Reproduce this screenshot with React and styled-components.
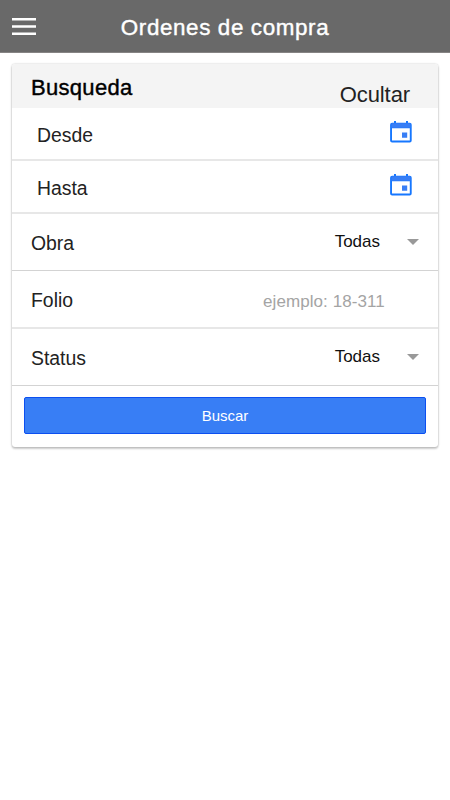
import React, { useState } from "react";
import styled, { createGlobalStyle } from "styled-components";

const GlobalStyle = createGlobalStyle`
  * {
    box-sizing: border-box;
  }

  body {
    margin: 0;
    background-color: #fff;
    font-family: "Liberation Sans", Arial, sans-serif;
    color: #222;
  }
`;

const Page = styled.div`
  min-height: 800px;
  display: flex;
  flex-direction: column;
`;

const Toolbar = styled.header`
  display: grid;
  grid-template-columns: 48px 1fr 48px;
  align-items: center;
  height: 53px;
  padding-top: 3px;
  background-color: #696969;
  border-bottom: 1px solid #868484;
`;

const MenuButton = styled.button`
  display: flex;
  padding: 0 0 2px 12px;
  border: none;
  background: none;
  cursor: pointer;
`;

const Title = styled.h1`
  margin: 0;
  color: #fff;
  font-size: 22.4px;
  font-weight: 400;
  letter-spacing: 0.62px;
  line-height: 28px;
  text-align: center;
  white-space: nowrap;
  -webkit-text-stroke: 0.4px #fff;
`;

const Card = styled.section`
  margin: 11px 12px 0;
  height: 383px;
  background-color: #fff;
  border-radius: 3px;
  overflow: hidden;
  box-shadow:
    0 2px 2px rgba(0, 0, 0, 0.14),
    0 0 2px rgba(0, 0, 0, 0.2),
    0 1px 3px rgba(0, 0, 0, 0.12);
`;

const CardHeader = styled.div`
  display: flex;
  justify-content: space-between;
  height: 44px;
  padding: 10px 28px 0 19px;
  background-color: #f4f4f4;
`;

const CardTitle = styled.h2`
  margin: 0;
  color: #000;
  font-size: 22px;
  font-weight: 400;
  letter-spacing: 0.3px;
  line-height: 28px;
  -webkit-text-stroke: 0.4px #000;
`;

const ToggleLink = styled.button`
  margin-top: 7px;
  padding: 0;
  border: none;
  background: none;
  color: #222;
  font-family: inherit;
  font-size: 22px;
  letter-spacing: -0.1px;
  line-height: 28px;
  height: 28px;
  cursor: pointer;
`;

const Row = styled.div`
  display: flex;
  align-items: center;
  justify-content: space-between;
  height: ${(props) => props.$height}px;
  padding: 0 19px 0 ${(props) => (props.$date ? 25 : 19)}px;
  border-bottom: ${(props) =>
    props.$soft ? "2px solid #e7e7e7" : "1px solid #d3d3d3"};
`;

const Label = styled.label`
  padding-top: 2px;
  font-size: 19.4px;
  line-height: 24px;
`;

const DateButton = styled.button`
  display: flex;
  margin: 0 7px 3px 0;
  padding: 0;
  border: none;
  background: none;
  cursor: pointer;
`;

const SelectButton = styled.button`
  display: flex;
  align-items: center;
  gap: 27px;
  padding: 0;
  border: none;
  background: none;
  color: #111;
  font-family: inherit;
  font-size: 17px;
  line-height: 22px;
  cursor: pointer;
`;

const Caret = styled.span`
  border-left: 6px solid transparent;
  border-right: 6px solid transparent;
  border-top: 6px solid #999;
`;

const FolioInput = styled.input`
  width: 156px;
  padding: 5px 0 0;
  border: none;
  outline: none;
  background: none;
  color: #222;
  font-family: inherit;
  font-size: 17px;
  letter-spacing: 0.08px;
  line-height: 22px;

  &::placeholder {
    color: #a4a4a4;
    opacity: 1;
  }
`;

const SearchButton = styled.button`
  display: block;
  width: 402px;
  height: 37px;
  margin: 11px 12px 0;
  padding: 0;
  border: 1px solid #0c4ff0;
  border-radius: 2px;
  background-color: #387ef5;
  color: #fff;
  font-family: inherit;
  font-size: 15px;
  cursor: pointer;
`;

const MenuIcon = () => (
  <svg width="24" height="17" viewBox="0 0 24 17" fill="#fff">
    <path d="M0 0h24v2.5H0zM0 7.2h24v2.5H0zM0 14.4h24v2.5H0z" />
  </svg>
);

const CalendarIcon = () => (
  <svg width="22" height="22" viewBox="0 0 22 22">
    <path
      fill="#1677ff"
      d="M4 0h2v1.8h10V0h2v1.8h1.6A2 2 0 0 1 21.7 3.8v15.8a2 2 0 0 1-2 2H2.1a2 2 0 0 1-2-2V3.8a2 2 0 0 1 2-2H4zM2 7.2v12.4h17.8V7.2z"
    />
    <path fill="#387ef5" d="M1.5 2.2h19v4.6h-19zM12 11.5h5.2v5.2h-5.2z" />
  </svg>
);

const DateRow = ({ label, height }) => (
  <Row $height={height} $date $soft>
    <Label>{label}</Label>
    <DateButton type="button">
      <CalendarIcon />
    </DateButton>
  </Row>
);

const SelectRow = ({ label, value, height }) => (
  <Row $height={height}>
    <Label>{label}</Label>
    <SelectButton type="button">
      {value}
      <Caret />
    </SelectButton>
  </Row>
);

const App = () => {
  const [folio, setFolio] = useState("");

  return (
    <>
      <GlobalStyle />
      <Page>
        <Toolbar>
          <MenuButton type="button">
            <MenuIcon />
          </MenuButton>
          <Title>Ordenes de compra</Title>
        </Toolbar>

        <Card>
          <CardHeader>
            <CardTitle>Busqueda</CardTitle>
            <ToggleLink type="button">Ocultar</ToggleLink>
          </CardHeader>

          <DateRow label="Desde" height={53} />
          <DateRow label="Hasta" height={53} />
          <SelectRow label="Obra" value="Todas" height={57} />
          <Row $height={58} $soft>
            <Label htmlFor="folio">Folio</Label>
            <FolioInput
              id="folio"
              type="text"
              placeholder="ejemplo: 18-311"
              value={folio}
              onChange={(e) => setFolio(e.target.value)}
            />
          </Row>
          <SelectRow label="Status" value="Todas" height={57} />

          <SearchButton type="button">Buscar</SearchButton>
        </Card>
      </Page>
    </>
  );
};

export default App;
